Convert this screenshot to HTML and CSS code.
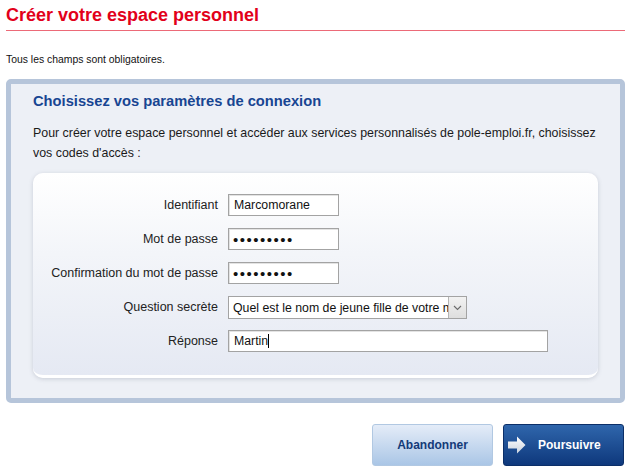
FILE: index.html
```html
<!DOCTYPE html>
<html lang="fr">
<head>
<meta charset="utf-8">
<title>Créer votre espace personnel</title>
<link rel="stylesheet" href="styles.css">
</head>
<body>
<div class="page">
  <h1 class="title">Créer votre espace personnel</h1>
  <p class="note">Tous les champs sont obligatoires.</p>
  <div class="panel">
    <h2 class="panel-title">Choisissez vos paramètres de connexion</h2>
    <p class="intro">Pour créer votre espace personnel et accéder aux services personnalisés de pole-emploi.fr, choisissez vos codes d'accès :</p>
    <div class="card">
      <div class="form">
        <label class="lbl" for="id">Identifiant</label>
        <div class="field"><input class="inp inp-short" id="id" type="text" value="Marcomorane"></div>
        <label class="lbl" for="pw">Mot de passe</label>
        <div class="field"><input class="inp inp-short inp-pw" id="pw" type="password" value="abcdefghi"></div>
        <label class="lbl" for="pw2">Confirmation du mot de passe</label>
        <div class="field"><input class="inp inp-short inp-pw" id="pw2" type="password" value="abcdefghi"></div>
        <label class="lbl" for="q">Question secrète</label>
        <div class="field">
          <div class="select-wrap">
            <select class="sel" id="q"><option>Quel est le nom de jeune fille de votre mère ?</option></select>
            <span class="sel-btn"><svg width="9" height="6" viewBox="0 0 9 6"><path d="M1 1 L4.5 4.5 L8 1" fill="none" stroke="#6b6b6b" stroke-width="1.1"/></svg></span>
          </div>
        </div>
        <label class="lbl" for="r">Réponse</label>
        <div class="field"><div class="inp inp-long fake" id="r">Martin<span class="caret"></span></div></div>
      </div>
    </div>
  </div>
  <div class="actions">
    <button class="btn btn-cancel" type="button">Abandonner</button>
    <button class="btn btn-go" type="button"><svg class="arrow" width="18" height="18" viewBox="0 0 18 18"><defs><linearGradient id="ag" x1="0" y1="0" x2="0" y2="1"><stop offset="0" stop-color="#ffffff"/><stop offset="1" stop-color="#c9d2de"/></linearGradient></defs><path d="M0 5.5 H9 V0.5 L17.5 9 L9 17.5 V12.5 H0 Z" fill="url(#ag)"/></svg><span>Poursuivre</span></button>
  </div>
</div>
</body>
</html>
```
FILE: styles.css
```css
html, body {
  margin: 0;
  padding: 0;
  background: #ffffff;
}
body {
  font-family: Arial, "Liberation Sans", sans-serif;
  color: #1a1a1a;
}
.page {
  padding: 0 4px 0 6px;
}
.title {
  margin: 0;
  padding: 4px 0 4px;
  font-size: 18px;
  line-height: 22px;
  font-weight: bold;
  color: #e2001a;
  border-bottom: 1px solid #ec6a78;
}
.note {
  margin: 22px 0 12px;
  font-size: 10.4px;
  line-height: 14px;
  color: #111;
}
.panel {
  border: 5px solid #b6c5da;
  border-radius: 5px;
  background: #edf0f6;
  padding: 8px 22px 20px 22px;
}
.panel-title {
  margin: 0;
  font-size: 14.7px;
  line-height: 18px;
  font-weight: bold;
  color: #184592;
}
.intro {
  margin: 13px -6px 10px 0;
  font-size: 12.4px;
  line-height: 20px;
  color: #1a1a1a;
}
.card {
  background: linear-gradient(#ffffff 0%, #f3f5f9 40%, #e5e9f3 100%);
  border-radius: 10px;
  border-bottom: 3px solid #ffffff;
  box-shadow: 0 1px 4px rgba(90, 100, 120, 0.25);
  padding: 21px 0 23px;
}
.form {
  display: grid;
  grid-template-columns: 185px 1fr;
  column-gap: 10px;
  row-gap: 12px;
  align-items: center;
}
.lbl {
  text-align: right;
  font-size: 12.5px;
  color: #222;
}
.field {
  display: flex;
  height: 22px;
}
.inp {
  box-sizing: border-box;
  height: 22px;
  margin: 0;
  border: 1px solid #a3a3a3;
  box-shadow: inset 1px 1px 0 #e3e3e3;
  background: #fff;
  padding: 0 5px;
  font-family: Arial, "Liberation Sans", sans-serif;
  font-size: 12.3px;
  color: #111;
  outline: none;
}
.inp-short {
  width: 111px;
}
.inp-pw {
  font-size: 15px;
  letter-spacing: 1.5px;
  padding-left: 4px;
}
.inp-long {
  width: 320px;
}
.fake {
  display: flex;
  align-items: center;
}
.caret {
  display: inline-block;
  width: 1px;
  height: 14px;
  background: #000;
}
.select-wrap {
  position: relative;
  width: 239px;
  height: 23px;
}
.sel {
  box-sizing: border-box;
  width: 239px;
  height: 23px;
  margin: 0;
  border: 1px solid #a3a3a3;
  background: #fff;
  padding: 0 18px 0 4px;
  font-family: Arial, "Liberation Sans", sans-serif;
  font-size: 12.3px;
  color: #111;
  appearance: none;
  -webkit-appearance: none;
  border-radius: 0;
  outline: none;
}
.sel-btn {
  position: absolute;
  top: 1px;
  right: 1px;
  width: 17px;
  height: 21px;
  background: linear-gradient(#f2f2f2, #dedede);
  border-left: 1px solid #b5b5b5;
  display: flex;
  align-items: center;
  justify-content: center;
}
.actions {
  display: flex;
  justify-content: flex-end;
  gap: 10px;
  margin-top: 21px;
  padding-right: 1px;
}
.btn {
  box-sizing: border-box;
  width: 121px;
  height: 42px;
  border-radius: 3px;
  font-family: Arial, "Liberation Sans", sans-serif;
  font-size: 12px;
  font-weight: bold;
  cursor: pointer;
  display: flex;
  align-items: center;
  justify-content: center;
  padding: 0;
}
.btn-cancel {
  background: linear-gradient(#e4ecf8, #aac6e6);
  border: 1px solid #b1c8e2;
  color: #143a78;
}
.btn-go {
  background: linear-gradient(#2f66ac, #0e387c);
  border: 1px solid #0c2f68;
  color: #ffffff;
  justify-content: flex-start;
  padding-left: 4px;
  gap: 12px;
}
.arrow {
  display: block;
}
```
